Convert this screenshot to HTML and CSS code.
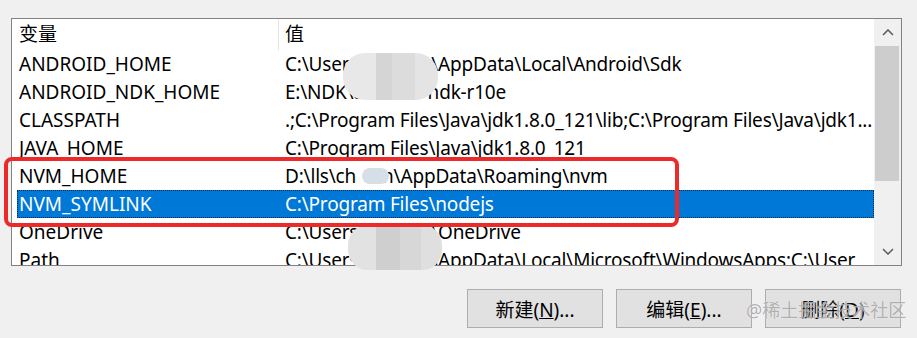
FILE: index.html
```html
<!DOCTYPE html>
<html lang="zh-CN">
<head>
  <meta charset="UTF-8" />
  <title>环境变量</title>
  <link rel="stylesheet" href="styles.css">
</head>
<body>
  <div class="dialog">
    <div class="list">
      <div class="table">
        <div class="head">
          <span>变量</span>
          <span class="col-value">值</span>
        </div>
        <div class="row"><span>ANDROID_HOME</span><span class="value">C:\Users<i class="gap"></i>\AppData\Local\Android\Sdk</span></div>
        <div class="row"><span>ANDROID_NDK_HOME</span><span class="value">E:\NDK\android-ndk-r10e</span></div>
        <div class="row"><span>CLASSPATH</span><span class="value">.;C:\Program Files\Java\jdk1.8.0_121\lib;C:\Program Files\Java\jdk1...</span></div>
        <div class="row"><span>JAVA_HOME</span><span class="value">C:\Program Files\Java\jdk1.8.0_121</span></div>
        <div class="row"><span>NVM_HOME</span><span class="value">D:\lls\ch<i class="gap gap-short"></i>n\AppData\Roaming\nvm</span></div>
        <div class="row selected"><span>NVM_SYMLINK</span><span class="value">C:\Program Files\nodejs</span></div>
        <div class="row"><span>OneDrive</span><span class="value">C:\Users<i class="gap"></i>\OneDrive</span></div>
        <div class="row"><span>Path</span><span class="value">C:\Users<i class="gap"></i>\AppData\Local\Microsoft\WindowsApps;C:\User</span></div>
      </div>
      <div class="scrollbar">
        <div class="arrow">
          <svg width="12" height="7" viewBox="0 0 12 7"><polyline points="1,6 6,1 11,6" /></svg>
        </div>
        <div class="thumb"></div>
        <div class="track"></div>
        <div class="arrow">
          <svg width="12" height="7" viewBox="0 0 12 7"><polyline points="1,1 6,6 11,1" /></svg>
        </div>
      </div>
    </div>

    <div class="buttons">
      <button class="button">新建(<u>N</u>)...</button>
      <button class="button">编辑(<u>E</u>)...</button>
      <button class="button">删除(<u>D</u>)</button>
    </div>

    <!-- mosaic patches over user names -->
    <div class="blob blob-a"></div>
    <div class="blob blob-b"></div>
    <div class="blob blob-c"></div>

    <div class="highlight"></div>
    <div class="watermark">@稀土掘金技术社区</div>
  </div>
</body>
</html>
```

FILE: styles.css
```css
body {
  margin: 0;
  background: #f0f0f0;
  font-family: "Noto Sans", "Noto Sans CJK SC", sans-serif;
  font-size: 19px;
  color: #000;
}
.dialog {
  position: relative;
  padding-top: 18px;
  height: 320px;
}
.list {
  display: flex;
  width: 889px;
  height: 246px;
  margin-left: 11px;
  border: 1px solid #828282;
  background: #fff;
}
.table {
  flex: 1;
  overflow: hidden;
  padding-left: 5px;
}
.head {
  display: grid;
  grid-template-columns: 261px 1fr;
  height: 31px;
  line-height: 31px;
}
.head span {
  padding-left: 2px;
}
.head .col-value {
  border-left: 1px solid #e5e5e5;
  padding-left: 6px;
}
.row {
  display: grid;
  grid-template-columns: 266px 1fr;
  height: 28px;
  line-height: 28px;
  white-space: nowrap;
}
.row span {
  padding: 0 2px;
  overflow: hidden;
}
.row .value {
  letter-spacing: -0.2px;
}
.row.selected {
  background: #0078d7;
  color: #fff;
  outline: 1px dotted #0a2a4a;
  outline-offset: -1px;
}
.gap {
  display: inline-block;
  width: 73px;
}
.gap-short {
  width: 26px;
}
.scrollbar {
  width: 27px;
  display: flex;
  flex-direction: column;
  background: #f0f0f0;
}
.arrow {
  height: 27px;
  display: flex;
  align-items: center;
  justify-content: center;
}
.arrow svg polyline {
  fill: none;
  stroke: #606060;
  stroke-width: 1.6;
}
.thumb {
  height: 135px;
  margin: 0 2px 0 1px;
  background: #cdcdcd;
}
.track {
  flex: 1;
}
.buttons {
  display: flex;
  justify-content: flex-end;
  gap: 13px;
  margin: 23px 16px 0 0;
}
.button {
  width: 136px;
  height: 39px;
  box-sizing: border-box;
  border: 1px solid #adadad;
  background: #e1e1e1;
  font: inherit;
  color: #000;
  padding: 0;
}
.blob {
  position: absolute;
  pointer-events: none;
}
.blob-a {
  left: 343px;
  top: 53px;
  width: 95px;
  height: 47px;
  border-radius: 22px;
  background: linear-gradient(90deg, #e8e8e8 0 35%, #d5d5d5 35% 52%, #dcdcdc 52% 76%, #e4e4e4 76%);
}
.blob-b {
  left: 362px;
  top: 168px;
  width: 27px;
  height: 16px;
  border-radius: 8px;
  background: #d6dee8;
}
.blob-c {
  left: 348px;
  top: 225px;
  width: 94px;
  height: 45px;
  border-radius: 20px;
  background: linear-gradient(90deg, #e2e2e2 0 30%, #cfcfcf 30% 55%, #d7d7d7 55% 78%, #dfdfdf 78%);
}
.highlight {
  position: absolute;
  left: 4px;
  top: 157px;
  width: 675px;
  height: 70px;
  box-sizing: border-box;
  border: 4px solid #eb2a2a;
  border-radius: 8px;
  pointer-events: none;
}
.watermark {
  position: absolute;
  left: 746px;
  top: 296px;
  font-size: 18px;
  line-height: 28px;
  white-space: nowrap;
  color: rgba(110, 110, 110, 0.55);
  text-shadow: 0 0 1px #fff;
  pointer-events: none;
}
```
